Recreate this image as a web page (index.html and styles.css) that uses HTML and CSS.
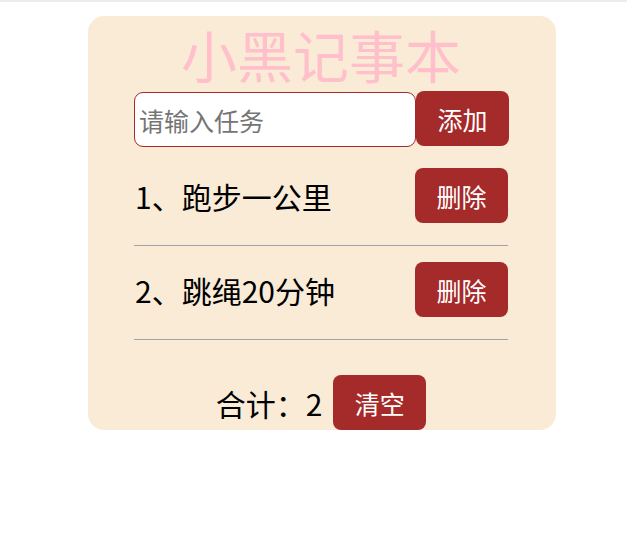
FILE: index.html
```html
<!DOCTYPE html>
<html lang="zh-CN">
<head>
<meta charset="utf-8">
<title>小黑记事本</title>
<link rel="stylesheet" href="styles.css">
</head>
<body>
<div class="topbar"></div>
<section class="todo">
  <h1 class="title">小黑记事本</h1>
  <div class="input-row">
    <input class="task-input" type="text" placeholder="请输入任务">
    <button class="btn">添加</button>
  </div>
  <ul class="list">
    <li class="item"><span class="item-text">1、跑步一公里</span><button class="btn">删除</button></li>
    <li class="item"><span class="item-text">2、跳绳20分钟</span><button class="btn">删除</button></li>
  </ul>
  <div class="footer">
    <span class="total">合计：2</span>
    <button class="btn">清空</button>
  </div>
</section>
</body>
</html>
```

FILE: styles.css
```css
html, body {
  margin: 0;
  padding: 0;
  background: #fff;
}
body {
  font-family: "Noto Sans CJK SC", "Noto Sans", sans-serif;
}
.topbar {
  height: 2px;
  background: #ececec;
}
.todo {
  box-sizing: border-box;
  width: 468px;
  height: 414px;
  margin: 14px 0 0 88px;
  padding: 0 48px 0 46px;
  background: #faebd7;
  border-radius: 16px;
  display: flex;
  flex-direction: column;
  align-items: center;
}
.title {
  margin: 0;
  padding: 6px 0 0;
  height: 69px;
  font-size: 56px;
  line-height: 64px;
  font-weight: 400;
  color: #ffc0cb;
  text-align: center;
  white-space: nowrap;
}
.input-row {
  width: 374px;
  display: flex;
  align-items: flex-start;
}
.task-input {
  box-sizing: border-box;
  width: 282px;
  height: 55px;
  margin-top: 1px;
  border: 1px solid #a52a2a;
  border-radius: 9px;
  background: #fff;
  padding: 0 4px;
  font-family: inherit;
  font-size: 25px;
  outline: none;
}
.task-input::placeholder {
  color: #757575;
}
.btn {
  box-sizing: border-box;
  width: 93px;
  height: 55px;
  border: none;
  border-radius: 8px;
  background: #a52a2a;
  color: #fff;
  font-family: inherit;
  font-size: 25px;
  padding: 0;
  flex-shrink: 0;
}
.list {
  list-style: none;
  width: 374px;
  margin: 5px 0 0;
  padding: 0;
}
.item {
  display: flex;
  justify-content: space-between;
  align-items: center;
  padding: 16px 0 22px;
  border-bottom: 1px solid #a0a3a8;
}
.item-text {
  font-size: 30px;
  color: #000;
  padding-left: 1px;
}
.footer {
  margin-top: 35px;
  display: flex;
  align-items: center;
  gap: 11px;
}
.total {
  font-size: 30px;
  color: #000;
}
```
